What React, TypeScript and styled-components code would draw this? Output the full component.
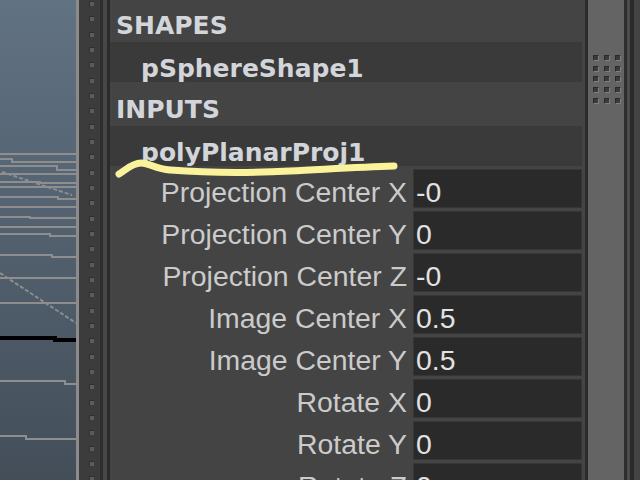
import React from 'react'
import styled, { createGlobalStyle } from 'styled-components'

const GlobalStyle = createGlobalStyle`
  html, body {
    margin: 0;
    padding: 0;
    background: #444444;
    overflow: hidden;
  }
  #root {
    width: 640px;
    height: 480px;
  }
`

const Screen = styled.div`
  position: relative;
  display: flex;
  width: 640px;
  height: 480px;
  overflow: hidden;
  background: #444444;
`

const Viewport = styled.div`
  flex: none;
  width: 76px;
  height: 480px;
  background: linear-gradient(#617283, #434e59);
  border-right: 3px solid #8b8b8b;
`

const GripStrip = styled.div`
  flex: none;
  width: 21px;
  box-sizing: border-box;
  background: #3c3c3c;
  display: flex;
  flex-direction: column;
  align-items: flex-start;
  gap: 9.33px;
  padding: 1px 0 0 10px;
  overflow: hidden;
`

const GripDot = styled.div<{ light?: boolean }>`
  flex: none;
  width: 4px;
  height: 4px;
  background: ${({ light }) => (light ? '#3a3a3a' : '#5c5c5c')};
  border-top: 1px solid ${({ light }) => (light ? '#2a2a2a' : '#303030')};
  border-left: 1px solid ${({ light }) => (light ? '#2a2a2a' : '#303030')};
  border-right: 1px solid ${({ light }) => (light ? '#808080' : '#3c3c3c')};
  border-bottom: 1px solid ${({ light }) => (light ? '#808080' : '#3c3c3c')};
`

const Divider = styled.div`
  flex: none;
  width: 10px;
  background: linear-gradient(
    to right,
    #2f2f2f 0 3px,
    #474747 3px 7px,
    #2b2b2b 7px 10px
  );
`

const Panel = styled.div`
  flex: none;
  width: 475px;
  padding-right: 3px;
  box-sizing: border-box;
  display: flex;
  flex-direction: column;
`

const HeaderRow = styled.div`
  flex: none;
  height: 42px;
  box-sizing: border-box;
  padding: 11px 0 0 6px;
  font-family: 'DejaVu Sans', sans-serif;
  font-weight: bold;
  font-size: 25px;
  line-height: 29px;
  color: #d2d5da;
  white-space: nowrap;
`

const NodeRow = styled.div`
  flex: none;
  height: 40px;
  margin-bottom: 2px;
  box-sizing: border-box;
  padding: 12px 0 0 31px;
  background: #3a3a3a;
  font-family: 'DejaVu Sans', sans-serif;
  font-weight: bold;
  font-size: 25px;
  line-height: 29px;
  color: #d2d5da;
  white-space: nowrap;
`

const AttrRow = styled.div`
  flex: none;
  height: 42px;
  display: grid;
  grid-template-columns: 297px 169px;
  column-gap: 6px;
`

const AttrLabel = styled.div`
  box-sizing: border-box;
  padding-top: 9px;
  text-align: right;
  font-family: 'Liberation Sans', Arial, sans-serif;
  font-size: 28.4px;
  line-height: 31px;
  color: #cbcbcb;
  white-space: nowrap;
`

const AttrValue = styled.div`
  margin-top: 1px;
  height: 39px;
  box-sizing: border-box;
  padding: 7px 0 0 2px;
  background: #2a2a2a;
  border: 1px solid #363636;
  font-family: 'Liberation Sans', Arial, sans-serif;
  font-size: 28.4px;
  line-height: 31px;
  color: #e2e2e2;
  white-space: nowrap;
`

const ScrollArea = styled.div`
  flex: none;
  width: 55px;
  display: flex;
`

const Line = styled.div<{ w: number; c: string }>`
  flex: none;
  width: ${({ w }) => w}px;
  background: ${({ c }) => c};
`

const Thumb = styled.div`
  flex: none;
  width: 36px;
  background: #646464;
  box-sizing: border-box;
  padding: 55px 0 0 5px;
`

const ThumbGrip = styled.div`
  display: grid;
  grid-template-columns: repeat(3, 6px);
  grid-auto-rows: 6px;
  column-gap: 5px;
  row-gap: 4.7px;
`

const Scribble = styled.svg`
  position: absolute;
  left: 110px;
  top: 150px;
  width: 300px;
  height: 35px;
  pointer-events: none;
`

const attrs: [string, string][] = [
  ['Projection Center X', '-0'],
  ['Projection Center Y', '0'],
  ['Projection Center Z', '-0'],
  ['Image Center X', '0.5'],
  ['Image Center Y', '0.5'],
  ['Rotate X', '0'],
  ['Rotate Y', '0'],
  ['Rotate Z', '0'],
]

// grid lines of the perspective view: [y1, x step, y2]
const gridLines: [number, number, number][] = [
  [154, 76, 154],
  [159, 12, 162],
  [166, 57, 170],
  [174, 76, 174],
  [182, 40, 183],
  [187, 76, 187],
  [197, 58, 199],
  [207, 76, 207],
  [217, 30, 218],
  [227, 76, 227],
  [234, 50, 236],
  [255, 52, 257],
  [278, 76, 278],
  [303, 76, 303],
  [381, 65, 384],
  [436, 26, 439],
]

function PerspView() {
  return (
    <svg width="76" height="480" viewBox="0 0 76 480">
      {gridLines.map(([a, s, b], i) => (
        <polyline
          key={i}
          points={`0,${a} ${s},${a} ${s},${b} 76,${b}`}
          fill="none"
          stroke="#8e8e8e"
          strokeWidth="2"
        />
      ))}
      <line x1="2" y1="172" x2="72" y2="195" stroke="#8e8e8e" strokeWidth="2" strokeDasharray="4 2" />
      <line x1="0" y1="273" x2="76" y2="323" stroke="#8e8e8e" strokeWidth="2" strokeDasharray="4 2" />
      <polyline points="0,338 55,338 55,340 76,340" fill="none" stroke="#000" strokeWidth="4" />
    </svg>
  )
}

export default function App() {
  return (
    <Screen>
      <GlobalStyle />
      <Viewport>
        <PerspView />
      </Viewport>
      <GripStrip>
        {Array.from({ length: 37 }).map((_, i) => (
          <GripDot key={i} />
        ))}
      </GripStrip>
      <Divider />
      <Panel>
        <HeaderRow>SHAPES</HeaderRow>
        <NodeRow>pSphereShape1</NodeRow>
        <HeaderRow>INPUTS</HeaderRow>
        <NodeRow>polyPlanarProj1</NodeRow>
        {attrs.map(([label, value]) => (
          <AttrRow key={label}>
            <AttrLabel>{label}</AttrLabel>
            <AttrValue>{value}</AttrValue>
          </AttrRow>
        ))}
      </Panel>
      <ScrollArea>
        <Line w={3} c="#2b2b2b" />
        <Thumb>
          <ThumbGrip>
            {Array.from({ length: 15 }).map((_, i) => (
              <GripDot key={i} light />
            ))}
          </ThumbGrip>
        </Thumb>
        <Line w={3} c="#2e2e2e" />
        <Line w={3} c="#4c4c4c" />
        <Line w={4} c="#2a2a2a" />
        <Line w={6} c="#444444" />
      </ScrollArea>
      <Scribble viewBox="110 150 300 35">
        <path
          d="M119 174 C 126 170, 132 163, 141 163 C 150 163, 155 169, 170 170 C 210 173, 250 173, 290 171 C 330 169, 360 167, 394 166"
          fill="none"
          stroke="#faf39c"
          strokeWidth="7"
          strokeLinecap="round"
        />
      </Scribble>
    </Screen>
  )
}
